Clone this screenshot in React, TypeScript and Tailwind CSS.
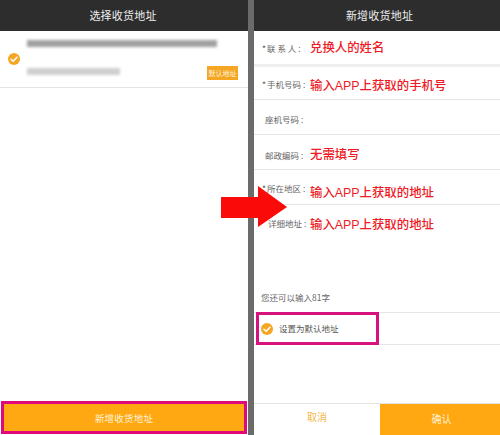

const cjk = { fontFamily: '"Noto Sans CJK SC", "Liberation Sans", sans-serif' };
const noteFont = { fontFamily: '"Liberation Sans", "Noto Sans CJK SC", sans-serif' };

function Check({ className }: { className: string }) {
  return (
    <svg viewBox="0 0 12 12" className={className}>
      <circle cx="6" cy="6" r="6" fill="#f5a623" />
      <path d="M3 6.2 L5.2 8.3 L9 4.2" fill="none" stroke="#fff" strokeWidth="1.5" strokeLinecap="round" strokeLinejoin="round" />
    </svg>
  );
}

function Header({ title, pad }: { title: string; pad: string }) {
  return (
    <div className={`h-[31px] shrink-0 bg-[#2d2d2d] flex items-center justify-center text-[11px] text-[#eeeeee] tracking-[0.2px] ${pad}`}>
      {title}
    </div>
  );
}

function Row({ label, star, note, h, border = "border-b border-[#e6e6e6]", labelY = "", noteY = "" }: { label: string; star?: boolean; note?: string; h: string; border?: string; labelY?: string; noteY?: string }) {
  return (
    <div className={`${h} ${border} shrink-0 flex items-center`}>
      <div className={`w-[56px] shrink-0 text-[8.5px] text-[#666666] whitespace-nowrap flex justify-start ${labelY}`}>
        {star ? <span className="w-[13px] shrink-0 pl-[8px] text-[#555555]">*</span> : <span className="w-[11px] shrink-0" />}
        <span>{label}</span>
      </div>
      {note ? <span className={`text-[12.4px] font-medium text-[#ee1a26] whitespace-nowrap ${noteY}`} style={noteFont}>{note}</span> : null}
    </div>
  );
}

export default function App() {
  return (
    <div className="relative w-[500px] h-[435px] bg-white overflow-hidden flex" style={cjk}>
      <div className="w-[248px] h-full flex flex-col">
        <Header title="选择收货地址" pad="pr-[2px]" />
        <div className="h-[57px] shrink-0 border-b border-[#e3e3e3] flex items-center pl-[8px] pr-[10px]">
          <Check className="w-[12px] h-[12px] shrink-0" />
          <div className="ml-[7px] flex-1 min-w-0 h-full flex flex-col pt-[9px]">
            <div className="w-[190px] h-[7px] bg-[#a0a0a0] blur-[1.5px]" />
            <div className="w-[93px] h-[7px] mt-[21px] bg-[#cfcfcf] blur-[1.5px]" />
          </div>
          <div className="shrink-0 self-end mb-[7px] w-[31px] h-[14px] bg-[#f5a623] text-[#fff3dc] text-[7px] flex items-center justify-center whitespace-nowrap">默认地址</div>
        </div>
        <div className="flex-1" />
        <div className="h-[33px] mb-[1px] mx-[1px] pt-[2px] bg-[#ffa812] border-[3px] border-[#e0067c] flex items-center justify-center text-[9.5px] text-[#fff1d6] tracking-[0.2px]">
          新增收货地址
        </div>
      </div>
      <div className="w-[6px] h-full bg-[#6b6b6b]" />
      <div className="flex-1 h-full flex flex-col">
        <Header title="新增收货地址" pad="pl-[5px]" />
        <Row h="h-[36px]" border="border-b-[3px] border-[#eeeeee]" star label="联 系 人 :" note="兑换人的姓名" labelY="mt-[2px]" noteY="mt-[2px]" />
        <Row h="h-[33px]" star label="手机号码 :" note="输入APP上获取的手机号" labelY="mt-[2px]" noteY="mt-[6px]" />
        <Row h="h-[35px]" label="座机号码 :" labelY="mt-[4px]" />
        <Row h="h-[35px]" label="邮政编码 :" note="无需填写" labelY="mt-[6px]" noteY="mt-[6px]" />
        <Row h="h-[35px]" star label="所在地区 :" note="输入APP上获取的地址" labelY="mt-[2px]" noteY="mt-[12px]" />
        <div className="h-[108px] shrink-0 border-b border-[#e6e6e6] flex flex-col">
          <div className="h-[36px] shrink-0 flex items-center">
            <div className="w-[56px] shrink-0 pl-[14px] text-[8.5px] text-[#666666] whitespace-nowrap">详细地址 :</div>
            <span className="text-[12.4px] font-medium text-[#ee1a26] whitespace-nowrap mt-[4px]" style={noteFont}>输入APP上获取的地址</span>
          </div>
          <div className="mt-auto mb-[8px] pl-[7px] text-[8.5px] text-[#666666]">您还可以输入81字</div>
        </div>
        <div className="h-[32px] shrink-0 border-b border-[#e6e6e6] flex items-center pl-[7px]">
          <Check className="w-[12px] h-[12px]" />
          <span className="ml-[6px] text-[8.5px] text-[#555555]">设置为默认地址</span>
        </div>
        <div className="flex-1" />
        <div className="h-[32px] shrink-0 flex border-t border-[#e3e3e3]">
          <div className="w-[126px] pb-[7px] flex items-center justify-center text-[10px] text-[#f2b84a]">取消</div>
          <div className="flex-1 pb-[3px] pl-[3px] bg-[#ffa812] flex items-center justify-center text-[10px] text-[#fff1d6]">确认</div>
        </div>
      </div>
      <div className="absolute left-[256px] top-[312px] w-[123px] h-[33px] border-[3px] border-[#d6127f]" />
      <svg className="absolute left-[220px] top-[186px] w-[68px] h-[42px]" viewBox="0 0 68 42">
        <path d="M1 11 H38 V0 L67 21 L38 41 V32 H1 Z" fill="#fb0a0a" />
      </svg>
    </div>
  );
}
